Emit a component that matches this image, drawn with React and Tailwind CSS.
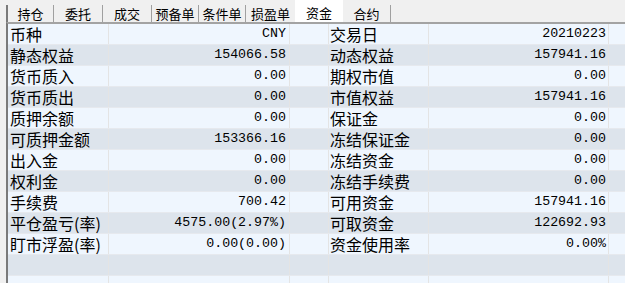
const tabs = [
  { name: "持仓", w: "w-[48px]" },
  { name: "委托", w: "w-[49px]" },
  { name: "成交", w: "w-[49px]" },
  { name: "预备单", w: "w-[47px]" },
  { name: "条件单", w: "w-[47px]" },
  { name: "损盈单", w: "w-[49px]" },
  { name: "资金", w: "w-[48px]", active: true },
  { name: "合约", w: "w-[48px]" },
];

const rows = [
  ["币种", "CNY", "交易日", "20210223"],
  ["静态权益", "154066.58", "动态权益", "157941.16"],
  ["货币质入", "0.00", "期权市值", "0.00"],
  ["货币质出", "0.00", "市值权益", "157941.16"],
  ["质押余额", "0.00", "保证金", "0.00"],
  ["可质押金额", "153366.16", "冻结保证金", "0.00"],
  ["出入金", "0.00", "冻结资金", "0.00"],
  ["权利金", "0.00", "冻结手续费", "0.00"],
  ["手续费", "700.42", "可用资金", "157941.16"],
  ["平仓盈亏(率)", "4575.00(2.97%)", "可取资金", "122692.93"],
  ["盯市浮盈(率)", "0.00(0.00)", "资金使用率", "0.00%"],
  ["", "", "", ""],
  ["", "", "", ""],
];

const cjk = "font-['Noto_Sans_CJK_SC',sans-serif]";
const mono = "font-['Liberation_Mono','Noto_Sans_CJK_SC',monospace]";

export default function App() {
  return (
    <div className={`w-[625px] h-[283px] overflow-hidden bg-[#f0f0f0] text-black ${cjk}`}>
      {/* Tab strip */}
      <div className="flex h-[22px] items-end pl-[6px]">
        {tabs.map((t, i) => (
          <div
            key={t.name}
            className={`${t.w} flex items-center justify-center text-[13px] leading-[16px] ${
              t.active
                ? "h-[22px] bg-white pt-[4px]"
                : `h-[17px] pt-[1px] ${i === 0 ? "border-l-2 border-l-[#7a7a7a]" : ""}`
            } ${
              t.active || tabs[i + 1]?.active ? "" : "border-r border-r-[#a0a0a0]"
            }`}
          >
            {t.name}
          </div>
        ))}
      </div>

      {/* Fund table */}
      <div className="ml-[6px] border-l-2 border-l-[#7a7a7a] border-t-2 border-t-[#a3a3a3]">
        {rows.map((r, i) => (
          <div
            key={i}
            className={`grid h-[21px] grid-cols-[101px_181px_39px_100px_180px_1fr] border-b border-b-[#e6e9ee] ${
              i % 2 === 0 ? "bg-[#eff6fe]" : "bg-[#dde4ec]"
            }`}
          >
            <div className="flex items-center border-r border-r-[#e4e4e4] pl-[2px] text-[16px] leading-[20px]">
              {r[0]}
            </div>
            <div
              className={`flex items-center justify-end border-r border-r-[#e4e4e4] pr-[3px] text-[13.3px] leading-[20px] ${mono}`}
            >
              {r[1]}
            </div>
            <div className="border-r border-r-[#e4e4e4]" />
            <div className="flex items-center border-r border-r-[#e4e4e4] pl-[1px] text-[16px] leading-[20px]">
              {r[2]}
            </div>
            <div
              className={`flex items-center justify-end border-r border-r-[#e4e4e4] pr-[2px] text-[13.3px] leading-[20px] ${mono}`}
            >
              {r[3]}
            </div>
            <div />
          </div>
        ))}
      </div>
    </div>
  );
}
